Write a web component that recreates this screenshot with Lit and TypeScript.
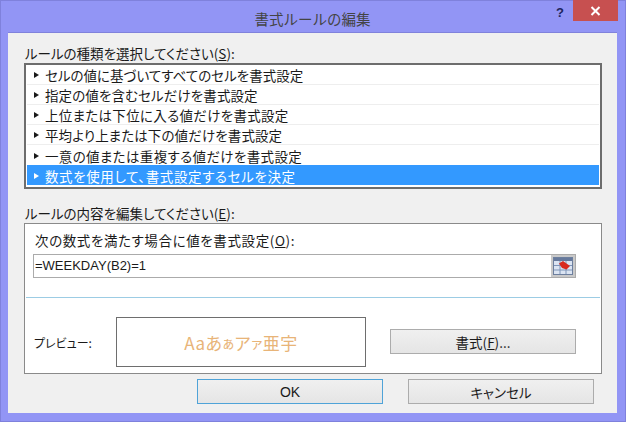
import { LitElement, html, css } from "lit";
import { customElement } from "lit/decorators.js";
import { styleMap } from "lit/directives/style-map.js";

const RULES: [string, number][] = [
  ["セルの値に基づいてすべてのセルを書式設定", 0],
  ["指定の値を含むセルだけを書式設定", 0.1],
  ["上位または下位に入る値だけを書式設定", 0.3],
  ["平均より上または下の値だけを書式設定", 0.1],
  ["一意の値または重複する値だけを書式設定", 0.35],
  ["数式を使用して、書式設定するセルを決定", 0.6],
];

@customElement("app-root")
export class AppRoot extends LitElement {
  static styles = css`
    :host {
      display: block;
      width: 626px;
      height: 422px;
      font-family: "Noto Sans CJK JP", "Liberation Sans", sans-serif;
      font-size: 13.5px;
      font-feature-settings: "palt";
      color: #1a1a1a;
    }
    * { box-sizing: border-box; }
    .frame {
      position: relative;
      width: 626px;
      height: 422px;
      background: #9295f5;
      border: 1px solid #7f81dc;
      display: flex;
      flex-direction: column;
    }
    .title {
      height: 31px;
      flex: none;
      display: flex;
      align-items: center;
      justify-content: center;
      font-size: 14.5px;
      font-feature-settings: normal;
      color: #444;
      padding-top: 3px;
      padding-right: 1px;
    }
    .help {
      position: absolute;
      left: 553px;
      top: 1px;
      width: 12px;
      height: 20px;
      display: flex;
      align-items: center;
      justify-content: center;
      font: bold 13px "Liberation Sans", sans-serif;
      color: #20245c;
    }
    .close {
      position: absolute;
      left: 572px;
      top: -1px;
      width: 45px;
      height: 21px;
      background: #c75050;
      display: flex;
      align-items: center;
      justify-content: center;
    }
    .client {
      width: 609px;
      height: 381px;
      margin-left: 7px;
      flex: none;
      background: #f0f0f0;
      border-top: 1px solid #8082dc;
      padding: 10px 0 0 16px;
      display: flex;
      flex-direction: column;
    }
    .label {
      height: 20px;
      line-height: 20px;
      padding-left: 1px;
      white-space: nowrap;
      flex: none;
    }
    .label2 { margin-top: 14px; }
    u { text-underline-offset: 1px; }
    .list {
      width: 578px;
      height: 126px;
      flex: none;
      background: #fff;
      border: 2px solid #6d6d6d;
      padding: 0 1px 1px 1px;
    }
    .row {
      height: 20px;
      display: flex;
      align-items: center;
      border-bottom: 1px solid #eeeeee;
      padding-left: 7px;
      gap: 6px;
      white-space: nowrap;
      line-height: 20px;
      padding-top: 1px;
    }
    .row.sel {
      background: #3399ff;
      color: #fff;
      border-bottom: none;
    }
    .row:nth-last-child(2) { border-bottom: none; }
    .tri {
      width: 0;
      height: 0;
      border-left: 5px solid currentColor;
      border-top: 3.5px solid transparent;
      border-bottom: 3.5px solid transparent;
      flex: none;
    }
    .panel {
      width: 578px;
      height: 151px;
      flex: none;
      background: #fff;
      border: 1px solid #8a8a8a;
      display: flex;
      flex-direction: column;
      padding-top: 6px;
    }
    .sub {
      height: 20px;
      line-height: 20px;
      padding-left: 10px;
      letter-spacing: 0.6px;
      flex: none;
    }
    .input {
      margin: 4px 0 0 8px;
      width: 543px;
      height: 24px;
      flex: none;
      border: 1px solid #ababab;
      display: flex;
      align-items: stretch;
      background: #fff;
    }
    .input span {
      flex: 1;
      padding-left: 1px;
      font-family: "Liberation Sans", sans-serif;
      font-size: 13px;
      line-height: 22px;
    }
    .pick {
      width: 24px;
      background: #c9c9c9;
      display: flex;
      align-items: center;
      justify-content: center;
    }
    .sep {
      height: 1px;
      background: #9ccce4;
      margin: 19px 1px 0 1px;
      flex: none;
    }
    .prev {
      display: flex;
      align-items: center;
      margin: 19px 0 0 8px;
      height: 50px;
    }
    .prev-label { width: 83px; padding-left: 1px; font-size: 12px; }
    .sample {
      width: 250px;
      height: 50px;
      border: 1px solid #6e6e6e;
      display: flex;
      align-items: center;
      justify-content: center;
      color: #e8b478;
      font-size: 17px;
      letter-spacing: 0.5px;
      white-space: nowrap;
    }
    .sample b { font-weight: 400; font-size: 14px; }
    button {
      font: inherit;
      font-feature-settings: inherit;
      color: inherit;
      width: 186px;
      height: 25px;
      padding: 0;
      border: 1px solid #acacac;
      background: linear-gradient(#f0f0f0, #e5e5e5);
      display: flex;
      align-items: center;
      justify-content: center;
    }
    .fmt { margin: 0 0 1px 24px; }
    .actions {
      display: flex;
      gap: 25px;
      margin: 5px 0 0 173px;
      flex: none;
    }
    .ok { border-color: #4fa3d8; }
    .ok span { font-family: "Liberation Sans", sans-serif; font-size: 14px; }
  `;

  render() {
    return html`
      <div class="frame">
        <div class="title">書式ルールの編集</div>
        <div class="help">?</div>
        <div class="close">
          <svg width="11" height="10" viewBox="0 0 11 10">
            <path d="M1.5 1 L9.5 9 M9.5 1 L1.5 9" stroke="#fff" stroke-width="2" fill="none" />
          </svg>
        </div>
        <div class="client">
          <div class="label">ルールの種類を選択してください(<u>S</u>):</div>
          <div class="list">
            ${RULES.map(
              ([r, ls], i) =>
                html`<div class="row ${i === 5 ? "sel" : ""}" style=${styleMap({ letterSpacing: `${ls}px` })}>
                  <i class="tri"></i>${r}
                </div>`
            )}
          </div>
          <div class="label label2">ルールの内容を編集してください(<u>E</u>):</div>
          <div class="panel">
            <div class="sub">次の数式を満たす場合に値を書式設定(<u>O</u>):</div>
            <div class="input">
              <span>=WEEKDAY(B2)=1</span>
              <div class="pick">
                <svg width="20" height="18" viewBox="0 0 20 18">
                  <rect x="0.5" y="0.5" width="19" height="17" fill="#dbe4f2" stroke="#6d7f9e" />
                  <rect x="1" y="1" width="18" height="3" fill="#66799c" />
                  <path d="M1 8.5H19M1 13H19M7 4V17M13 4V17" stroke="#7f95b8" fill="none" />
                  <path d="M6 6.5 L10 4 L17 9 L13.5 12.5 L9 11 Z" fill="#d8291f" />
                </svg>
              </div>
            </div>
            <div class="sep"></div>
            <div class="prev">
              <div class="prev-label">プレビュー:</div>
              <div class="sample">Aaあ<b>ぁ</b>ア<b>ァ</b>亜宇</div>
              <button class="fmt">書式(<u>F</u>)...</button>
            </div>
          </div>
          <div class="actions">
            <button class="ok"><span>OK</span></button>
            <button>キャンセル</button>
          </div>
        </div>
      </div>
    `;
  }
}
